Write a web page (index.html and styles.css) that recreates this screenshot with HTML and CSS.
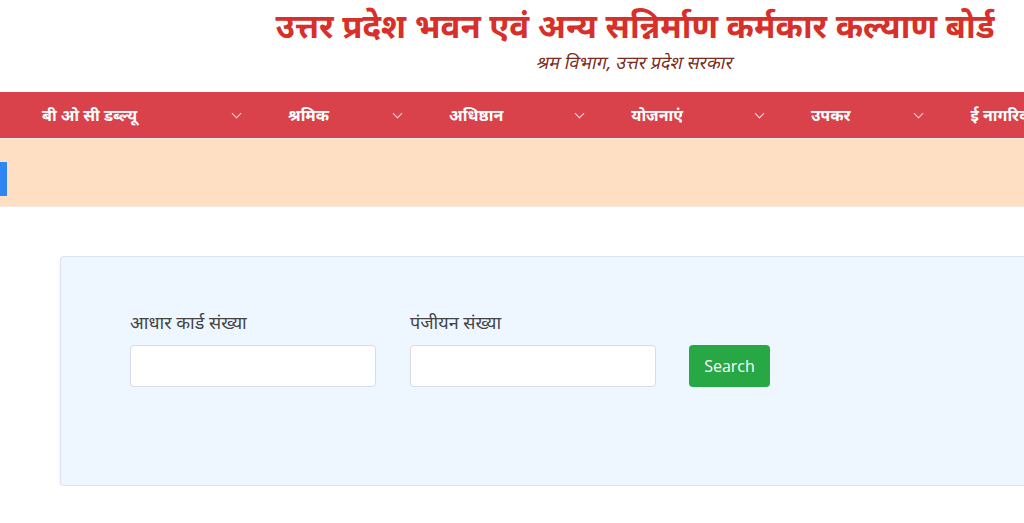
FILE: index.html
```html
<!DOCTYPE html>
<html lang="hi">
<head>
    <meta charset="UTF-8">
    <meta name="viewport" content="width=device-width, initial-scale=1.0">
    <title>उत्तर प्रदेश भवन एवं अन्य सन्निर्माण कर्मकार कल्याण बोर्ड</title>
    <link rel="stylesheet" href="styles.css">
</head>
<body>
    <div class="page">
        <!-- Header -->
        <header class="site-header">
            <h1>उत्तर प्रदेश भवन एवं अन्य सन्निर्माण कर्मकार कल्याण बोर्ड</h1>
            <p class="subtitle"><span>श्रम विभाग, उत्तर प्रदेश सरकार</span></p>
        </header>

        <!-- Main menu -->
        <nav class="main-nav">
            <ul>
                <li class="first"><span>बी ओ सी डब्ल्यू</span><i class="chev"></i></li>
                <li><span>श्रमिक</span><i class="chev"></i></li>
                <li class="wide"><span>अधिष्ठान</span><i class="chev"></i></li>
                <li class="wide"><span>योजनाएं</span><i class="chev"></i></li>
                <li><span>उपकर</span><i class="chev"></i></li>
                <li><span>ई नागरिक सेवाएं</span><i class="chev"></i></li>
            </ul>
        </nav>

        <!-- News strip -->
        <div class="news-strip">
            <span class="news-tag">सूचना</span>
        </div>

        <!-- Search card -->
        <div class="search-card">
            <form class="search-form">
                <div class="field">
                    <label for="aadhar">आधार कार्ड संख्या</label>
                    <input type="text" id="aadhar">
                </div>
                <div class="field">
                    <label for="regno">पंजीयन संख्या</label>
                    <input type="text" id="regno">
                </div>
                <button type="submit">Search</button>
            </form>
        </div>
    </div>
</body>
</html>
```

FILE: styles.css
```css
html, body {
    overflow: hidden;
}
body {
    margin: 0;
    background-color: #fff;
    font-family: "Noto Sans", "Open Sans", sans-serif;
    color: #333;
}
.page {
    width: 1270px;
}
.site-header {
    text-align: center;
    height: 92px;
}
.site-header h1 {
    margin: 0;
    padding-top: 4px;
    font-size: 33px;
    line-height: 44px;
    font-weight: bold;
    color: #d7302b;
}
.subtitle {
    margin: 2px 0 0;
    font-size: 18px;
    color: #7c2b22;
}
.subtitle span {
    display: inline-block;
    transform: skewX(-12deg);
}
.main-nav {
    background-color: #d9424a;
    height: 46px;
    border-bottom: 1px solid #f4ece6;
}
.main-nav ul {
    list-style: none;
    margin: 0;
    padding: 0 0 0 18px;
    display: flex;
    height: 100%;
}
.main-nav li {
    display: flex;
    align-items: center;
    padding: 0 24px;
    color: #fff;
    font-size: 16px;
    font-weight: bold;
}
.main-nav li span {
    margin-right: 65px;
}
.main-nav li.wide span {
    margin-right: 73px;
}
.main-nav li.first span {
    margin-right: 96px;
}
.chev {
    width: 6px;
    height: 6px;
    border-right: 1.5px solid #f6d6d6;
    border-bottom: 1.5px solid #f6d6d6;
    transform: rotate(45deg);
    margin-top: -4px;
}
.news-strip {
    background-color: #fedfc4;
    height: 67px;
    display: flex;
    align-items: center;
    border-bottom: 1px solid #f3e6da;
}
.news-tag {
    display: block;
    width: 7px;
    height: 34px;
    margin-top: 13px;
    overflow: hidden;
    background-color: #2e86f2;
    color: #fff;
    font-size: 12px;
    text-indent: -40px;
}
.search-card {
    margin: 49px 60px 0;
    height: 228px;
    background-color: #eef6ff;
    border: 1px solid #dde3ea;
    border-radius: 4px;
    box-shadow: 0 2px 4px rgba(0, 0, 0, 0.06);
}
.search-form {
    display: flex;
    align-items: flex-end;
    padding: 53px 0 0 69px;
}
.field {
    display: flex;
    flex-direction: column;
    margin-right: 34px;
}
.field label {
    font-size: 18px;
    color: #444;
    margin-bottom: 11px;
}
.field input {
    width: 246px;
    height: 42px;
    box-sizing: border-box;
    border: 1px solid #d8dde3;
    border-radius: 4px;
    background-color: #fff;
}
.field:nth-child(2) {
    margin-right: 33px;
}
button {
    height: 42px;
    width: 81px;
    background-color: #28a745;
    color: #fff;
    border: none;
    border-radius: 4px;
    font-family: "Open Sans", sans-serif;
    font-size: 16px;
    cursor: pointer;
}
```
